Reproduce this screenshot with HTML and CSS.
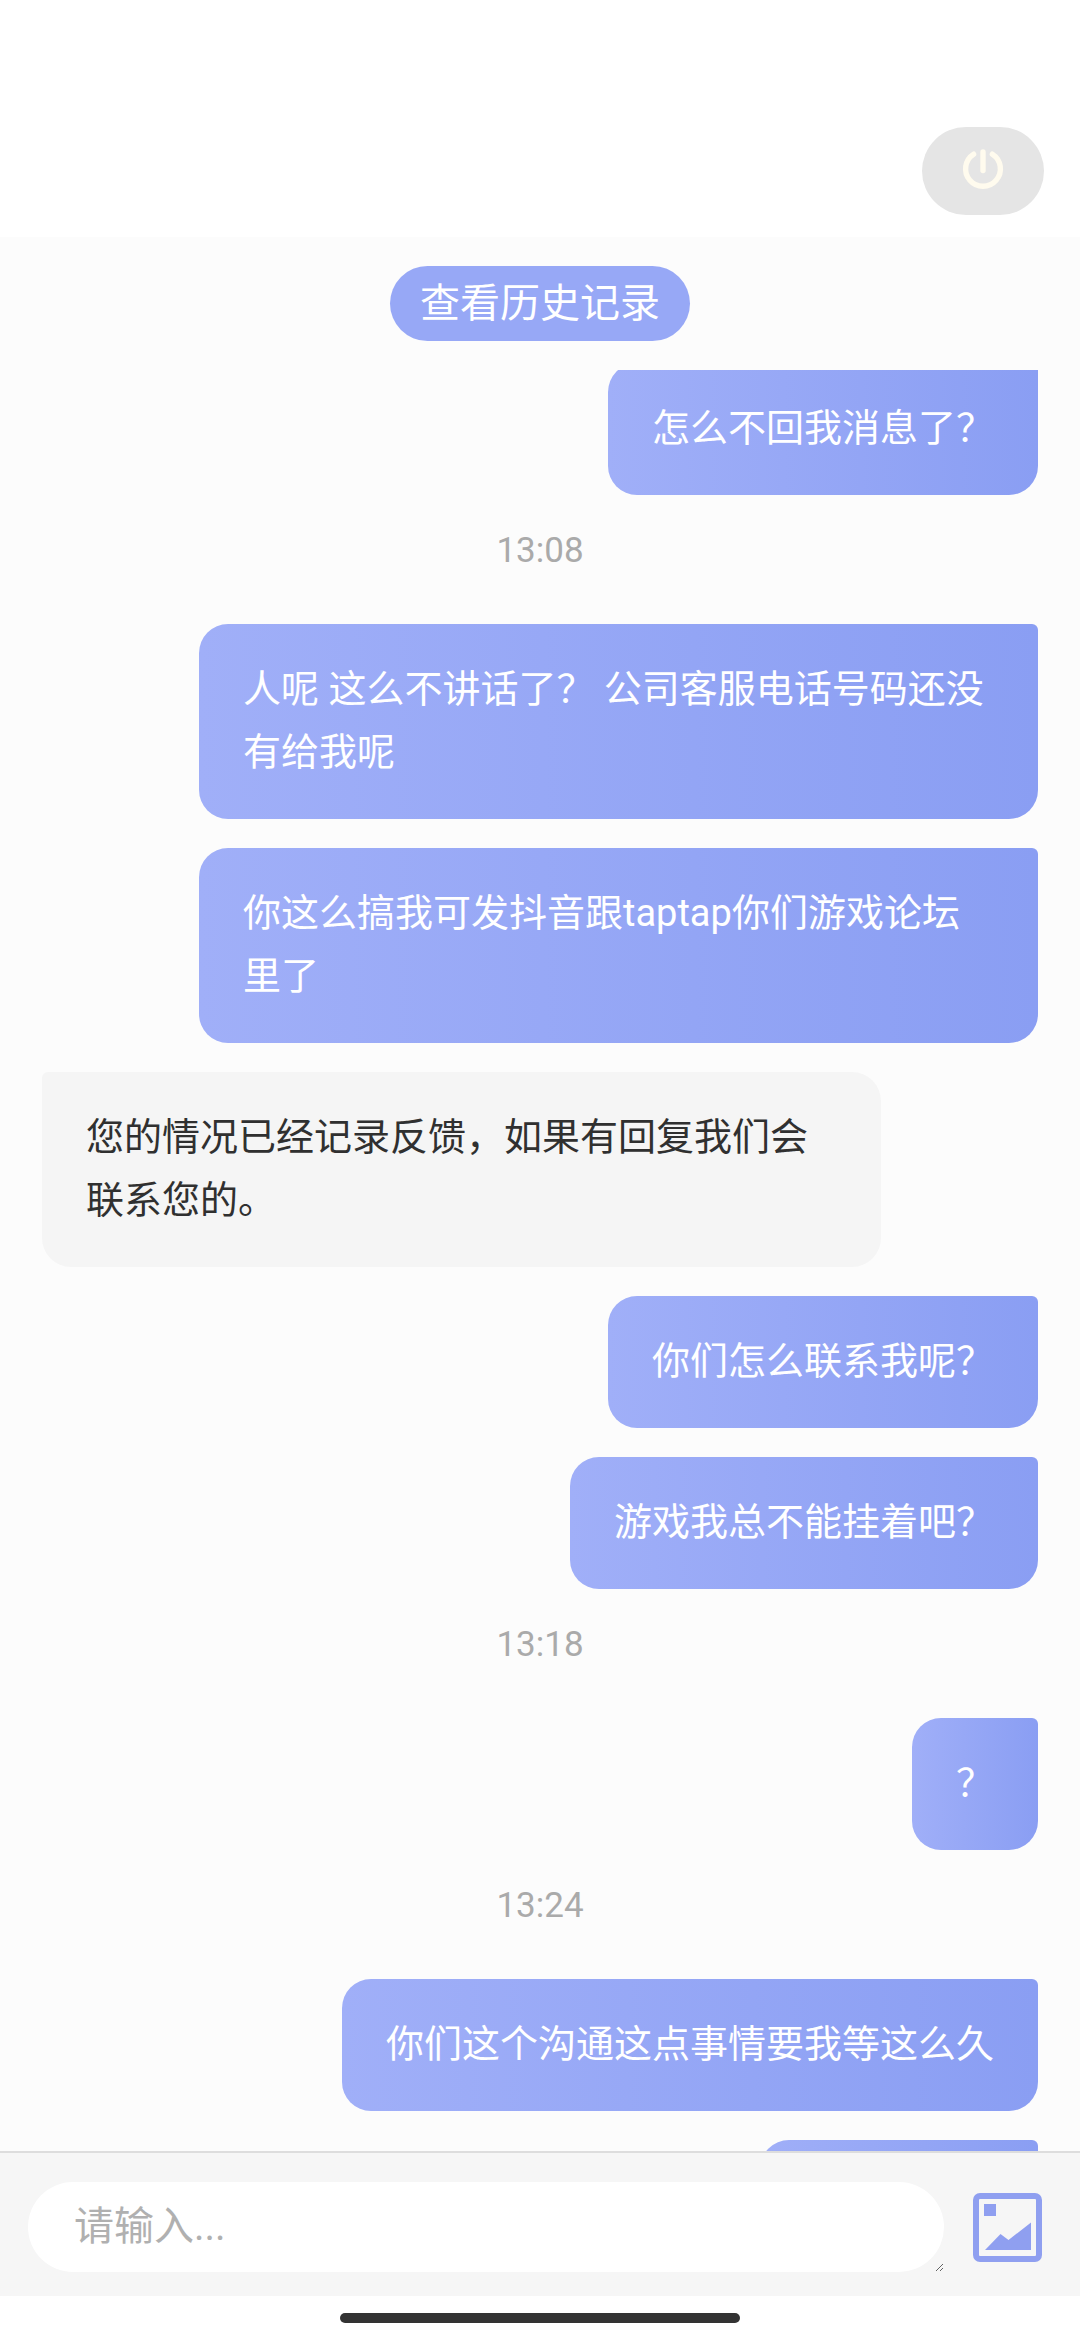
FILE: index.html
```html
<!DOCTYPE html>
<html lang="zh-CN">
<head>
<meta charset="utf-8">
<meta name="viewport" content="width=device-width, initial-scale=1">
<title>客服</title>
<link rel="stylesheet" href="styles.css">
</head>
<body>
<div class="app">
  <header class="topbar">
    <button class="power" type="button" aria-label="退出">
      <svg class="power-icon" viewBox="0 0 44 44" fill="none" stroke="#fffbee" stroke-width="5.4" stroke-linecap="round">
        <path d="M12.6 7.2a17.4 17.4 0 1 0 18.8 0"/>
        <path d="M22 5v18.5"/>
      </svg>
    </button>
  </header>

  <main class="chat">
    <button class="history" type="button">查看历史记录</button>
    <div class="viewport">
      <div class="messages">
        <p class="bubble mine">怎么不回我消息了？</p>
        <time class="time">13:08</time>
        <p class="bubble mine">人呢 这么不讲话了？ 公司客服电话号码还没有给我呢</p>
        <p class="bubble mine">你这么搞我可发抖音跟taptap你们游戏论坛里了</p>
        <p class="bubble theirs">您的情况已经记录反馈，如果有回复我们会联系您的。</p>
        <p class="bubble mine">你们怎么联系我呢？</p>
        <p class="bubble mine">游戏我总不能挂着吧？</p>
        <time class="time">13:18</time>
        <p class="bubble mine">？</p>
        <time class="time">13:24</time>
        <p class="bubble mine">你们这个沟通这点事情要我等这么久</p>
        <p class="bubble mine pending">&nbsp;</p>
      </div>
    </div>
  </main>

  <footer class="composer">
    <textarea class="entry" rows="1" placeholder="请输入..." aria-label="请输入"></textarea>
    <button class="picture" type="button" aria-label="图片">
      <svg class="picture-icon" viewBox="0 0 69 69" fill="#8f9ff0">
        <rect x="3" y="3" width="63" height="63" rx="4" fill="none" stroke="#8f9ff0" stroke-width="6"/>
        <rect x="11" y="11" width="12" height="12"/>
        <path d="M12 57 27.500 41l8 6L58 29.500V57z"/>
      </svg>
    </button>
  </footer>
  <div class="home"><span class="home-bar"></span></div>
</div>
</body>
</html>
```

FILE: styles.css
```css
* {
  box-sizing: border-box;
}

body {
  margin: 0;
  background: #fff;
  font-family: Roboto, "Noto Sans CJK SC", sans-serif;
}

button {
  border: 0;
  padding: 0;
  font-family: inherit;
}

.app {
  display: flex;
  flex-direction: column;
  height: 100vh;
}

.topbar {
  display: flex;
  justify-content: flex-end;
  padding: 127px 36px 22px;
}

.power {
  width: 122px;
  height: 88px;
  padding-bottom: 4px;
  border-radius: 44px;
  background: #e5e5e5;
}

.power-icon {
  display: block;
  width: 44px;
  height: 44px;
  margin: 0 auto;
}

.chat {
  flex: 1;
  min-height: 0;
  display: flex;
  flex-direction: column;
  align-items: center;
  gap: 29px;
  padding-top: 29px;
  background: #fcfcfc;
}

.history {
  height: 75px;
  padding: 0 30px;
  border-radius: 38px;
  background: #97a8f6;
  color: #fff;
  font-size: 40px;
  line-height: 75px;
}

.viewport {
  flex: 1;
  min-height: 0;
  align-self: stretch;
  overflow: hidden;
}

.messages {
  display: flex;
  flex-direction: column;
  gap: 29px;
  margin-top: -7px;
  padding: 0 42px;
}

.bubble {
  max-width: 839px;
  margin: 0;
  padding: 34px 44px 35px;
  font-size: 38px;
  line-height: 63px;
}

.mine {
  align-self: flex-end;
  border-radius: 29px 6px 29px 29px;
  background: linear-gradient(to right, #a0aff8, #8a9ef3);
  color: #fff;
}

.theirs {
  align-self: flex-start;
  border-radius: 6px 29px 29px 29px;
  background: #f5f5f5;
  color: #303030;
}

.pending {
  min-width: 278px;
}

.time {
  align-self: center;
  margin-bottom: 17px;
  color: #aaa;
  font-size: 35px;
  line-height: 54px;
}

.composer {
  display: flex;
  align-items: center;
  gap: 29px;
  padding: 29px 38px 24px 28px;
  border-top: 2px solid #ddd;
  background: #f6f6f6;
}

.entry {
  flex: 1;
  min-width: 0;
  height: 90px;
  padding: 16px 46px;
  border: 0;
  border-radius: 45px;
  outline: 0;
  background: #fff;
  color: #303030;
  font-family: inherit;
  font-size: 40px;
  line-height: 58px;
  overflow: hidden;
}

.entry::placeholder {
  color: #b0b0b0;
}

.picture {
  background: none;
}

.picture-icon {
  display: block;
  width: 69px;
  height: 69px;
}

.home {
  display: flex;
  justify-content: center;
  padding: 17px 0;
}

.home-bar {
  width: 37%;
  height: 10px;
  border-radius: 5px;
  background: #333;
}
```
